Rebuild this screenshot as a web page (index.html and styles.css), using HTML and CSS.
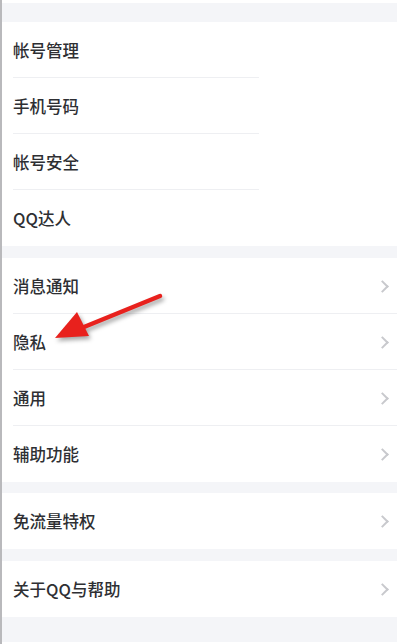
FILE: index.html
```html
<!DOCTYPE html>
<html lang="zh-CN">
<head>
    <meta charset="UTF-8">
    <meta name="viewport" content="width=device-width, initial-scale=1.0">
    <title>设置</title>
    <link rel="stylesheet" href="styles.css">
</head>
<body>
    <div class="page">
        <div class="gap gap-top"></div>
        <div class="group short-lines">
            <div class="row"><span>帐号管理</span></div>
            <div class="row"><span>手机号码</span></div>
            <div class="row"><span>帐号安全</span></div>
            <div class="row"><span>QQ达人</span></div>
        </div>
        <div class="gap"></div>
        <div class="group">
            <div class="row"><span>消息通知</span><i class="chev"></i></div>
            <div class="row"><span>隐私</span><i class="chev"></i></div>
            <div class="row"><span>通用</span><i class="chev"></i></div>
            <div class="row"><span>辅助功能</span><i class="chev"></i></div>
        </div>
        <div class="gap gap-sm"></div>
        <div class="group">
            <div class="row"><span>免流量特权</span><i class="chev"></i></div>
        </div>
        <div class="gap"></div>
        <div class="group">
            <div class="row"><span>关于QQ与帮助</span><i class="chev"></i></div>
        </div>
        <div class="gap gap-bottom"></div>

        <!-- red annotation arrow -->
        <svg class="arrow" width="120" height="60" viewBox="0 0 120 60">
            <line x1="108" y1="4" x2="32" y2="35" stroke="#e8211d" stroke-width="4.5" stroke-linecap="round"/>
            <polygon points="3,46 25,20 37,44" fill="#e8211d"/>
        </svg>
    </div>
</body>
</html>
```

FILE: styles.css
```css
body {
    margin: 0;
    background: #fff;
    font-family: "Noto Sans CJK SC", "Noto Sans", sans-serif;
}
.page {
    position: relative;
    border-left: 2px solid #b9b9bc;
    padding: 3px 3px 2px 0;
    background: #fff;
}
.gap {
    height: 12px;
    background: #f4f5f8;
}
.gap-top {
    height: 19px;
}
.gap-sm {
    height: 11px;
}
.gap-bottom {
    height: 25px;
}
.group {
    background: #fff;
}
.row {
    height: 56px;
    box-sizing: border-box;
    display: flex;
    align-items: center;
    justify-content: space-between;
    padding: 0 9px 0 11px;
    font-size: 16.5px;
    font-weight: 500;
    color: #2e2f33;
    position: relative;
}
.row::after {
    content: "";
    position: absolute;
    left: 11px;
    right: 0;
    bottom: 0;
    height: 1px;
    background: #eeeff2;
}
.row:last-child::after {
    display: none;
}
.short-lines .row::after {
    right: auto;
    width: 246px;
}
.chev {
    width: 7px;
    height: 7px;
    border-top: 2px solid #c8c9cd;
    border-right: 2px solid #c8c9cd;
    transform: rotate(45deg);
    margin-right: 1px;
}
.arrow {
    position: absolute;
    left: 50px;
    top: 292px;
    filter: drop-shadow(2px 3px 2px rgba(0,0,0,0.35));
}
```
